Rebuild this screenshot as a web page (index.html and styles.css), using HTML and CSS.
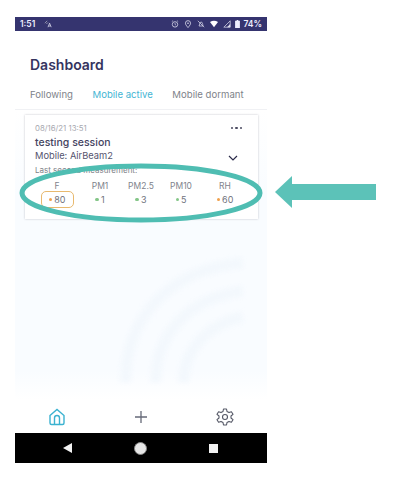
FILE: index.html
```html
<!DOCTYPE html>
<html lang="en">
<head>
  <meta charset="UTF-8">
  <meta name="viewport" content="width=device-width, initial-scale=1.0">
  <title>Dashboard</title>
  <link rel="stylesheet" href="styles.css">
</head>
<body>
  <div class="phone">
    <div class="status-bar">
      <div class="status-left">
        <span>1:51</span>
        <svg class="status-icon" viewBox="0 0 10 10"><path d="M1 4 L4 1 M3 5 L5 3" stroke="#aab" stroke-width="1" fill="none"/><path d="M5 9 L7 4 L9 9 M6 7.5 H8" stroke="#dde" stroke-width="1" fill="none"/></svg>
      </div>
      <div class="status-right">
        <svg class="status-icon" viewBox="0 0 10 10"><circle cx="5" cy="5.5" r="3.4" stroke="#dde" fill="none"/><path d="M5 3.6 V5.6 L6.3 6.4 M1 2 L2.6 .8 M9 2 L7.4 .8" stroke="#dde" stroke-width=".8" fill="none"/></svg>
        <svg class="status-icon" viewBox="0 0 10 10"><path d="M5 9.5 C3 7 1.8 5.6 1.8 4 A3.2 3.2 0 0 1 8.2 4 C8.2 5.6 7 7 5 9.5 Z" stroke="#dde" fill="none"/><circle cx="5" cy="4" r="1" fill="#dde"/></svg>
        <svg class="status-icon" viewBox="0 0 10 10"><path d="M2.5 7.5 C3.5 6 3 3 5 2.5 C7 2.5 7 5 7.5 7.5 Z M1 1 L9 9" stroke="#dde" stroke-width=".9" fill="none"/></svg>
        <svg class="status-icon" viewBox="0 0 10 10"><path d="M0 2.5 Q5 -.5 10 2.5 L5 9 Z" fill="#fff"/></svg>
        <svg class="status-icon" viewBox="0 0 10 10"><path d="M1 9 L9 1 V9 Z" stroke="#dde" stroke-width=".9" fill="none"/><path d="M5 9 L9 5 V9 Z" fill="#dde"/></svg>
        <svg class="battery" viewBox="0 0 6 10"><path d="M2 0 H4 V1 H6 V10 H0 V1 H2 Z" fill="#eef"/></svg>
        <span>74%</span>
      </div>
    </div>

    <div class="screen">
      <h1 class="title">Dashboard</h1>
      <div class="tabs">
        <span class="tab">Following</span>
        <span class="tab tab-active">Mobile active</span>
        <span class="tab">Mobile dormant</span>
      </div>

      <div class="content">
        <div class="card">
          <div class="card-top">
            <span class="date">08/16/21 13:51</span>
            <span class="dots"><i></i><i></i><i></i></span>
          </div>
          <div class="name">testing session</div>
          <div class="device-row">
            <span class="device">Mobile: AirBeam2</span>
            <svg class="chevron" viewBox="0 0 10 6"><path d="M1 1 L5 5 L9 1" stroke="#2b2b4a" stroke-width="1.2" fill="none"/></svg>
          </div>
          <div class="last">Last second measurement:</div>
          <div class="stats">
            <div class="stat"><span class="label">F</span><span class="value value-box"><i class="dot orange"></i>80</span></div>
            <div class="stat"><span class="label">PM1</span><span class="value"><i class="dot green"></i>1</span></div>
            <div class="stat"><span class="label">PM2.5</span><span class="value"><i class="dot green"></i>3</span></div>
            <div class="stat"><span class="label">PM10</span><span class="value"><i class="dot green"></i>5</span></div>
            <div class="stat"><span class="label">RH</span><span class="value"><i class="dot orange"></i>60</span></div>
          </div>
        </div>
        <svg class="watermark" viewBox="0 0 130 130"><path d="M5 125 C5 60 50 12 122 6 M35 125 C35 80 65 42 122 34 M63 125 C63 95 85 68 122 60" stroke="#f3f8fd" stroke-width="11" fill="none"/></svg>
      </div>

      <div class="bottom-nav">
        <svg class="nav-icon" viewBox="0 0 18 18"><path d="M2 7.5 L9 1.5 L16 7.5 V15 A1.5 1.5 0 0 1 14.5 16.500 H3.500 A1.500 1.500 0 0 1 2 15 Z M6.500 16.500 V10 A2.500 2.500 0 0 1 11.500 10 V16.500" stroke="#3bb2d0" stroke-width="1.400" fill="none"/></svg>
        <svg class="nav-icon" viewBox="0 0 18 18"><path d="M9 3 V15 M3 9 H15" stroke="#666a78" stroke-width="1.300" fill="none"/></svg>
        <svg class="nav-icon" viewBox="0 0 18 18"><path d="M7.500 1 H10.500 L11 3.500 L13 4.600 L15.400 3.700 L17 6.300 L15 8 V10 L17 11.700 L15.400 14.300 L13 13.400 L11 14.500 L10.500 17 H7.500 L7 14.500 L5 13.400 L2.600 14.300 L1 11.700 L3 10 V8 L1 6.300 L2.600 3.700 L5 4.600 L7 3.500 Z" stroke="#555866" stroke-width="1.100" stroke-linejoin="round" fill="none"/><circle cx="9" cy="9" r="2.500" stroke="#555866" stroke-width="1.100" fill="none"/></svg>
      </div>
    </div>

    <div class="system-nav">
      <span class="sys-back"></span>
      <span class="sys-home"></span>
      <span class="sys-recent"></span>
    </div>
  </div>

  <svg class="ellipse" viewBox="0 0 244 60"><ellipse cx="122" cy="30" rx="119" ry="27" stroke="#4fbdb2" stroke-width="5" fill="none"/></svg>
  <svg class="arrow" viewBox="0 0 101 32"><path d="M0 16 L17 0 V8 H101 V24 H17 V32 Z" fill="#5cc2b8"/></svg>
</body>
</html>
```

FILE: styles.css
```css
body {
  margin: 0;
  padding: 0;
  background-color: #fff;
  font-family: "Inter", "Liberation Sans", sans-serif;
}

.phone {
  width: 252px;
  height: 446px;
  margin: 17px 0 0 15px;
  display: flex;
  flex-direction: column;
}

.status-bar {
  height: 14px;
  flex-shrink: 0;
  background-color: #35346f;
  color: #eef;
  font-size: 8.5px;
  font-weight: 600;
  display: flex;
  justify-content: space-between;
  align-items: center;
  padding: 0 5px;
}

.status-left,
.status-right {
  display: flex;
  align-items: center;
}

.status-left {
  gap: 7px;
}

.status-right {
  gap: 3px;
}

.status-icon {
  width: 8px;
  height: 8px;
  margin-left: 2px;
}

.battery {
  width: 5px;
  height: 8px;
  margin-left: 1px;
}

.screen {
  flex: 1;
  display: flex;
  flex-direction: column;
  min-height: 0;
}

.title {
  margin: 26px 0 0 15px;
  height: 16px;
  line-height: 16px;
  color: #35345f;
  font-size: 14px;
  font-weight: 600;
}

.tabs {
  display: flex;
  gap: 19.5px;
  padding: 10px 0 0 15px;
  height: 32px;
  box-sizing: border-box;
  font-size: 9.6px;
  line-height: 13px;
  color: #80838a;
  border-bottom: 1px solid #f0f1f4;
  margin-top: 5px;
}

.tab-active {
  color: #45b5d3;
}

.content {
  flex: 1;
  padding: 5px 9px 0 10px;
  background: linear-gradient(#ffffff, #f9fcff 30%, #f9fcff 90%, #fff);
  overflow: hidden;
  position: relative;
}

.card {
  height: 104px;
  box-sizing: border-box;
  padding: 8px 9px 0 10px;
  background-color: #fff;
  box-shadow: 0 0 2px rgba(60, 60, 80, .3);
  position: relative;
  z-index: 1;
}

.card-top {
  display: flex;
  justify-content: space-between;
  align-items: center;
  height: 10px;
}

.date {
  font-size: 7.8px;
  color: #a8a9b0;
}

.dots {
  display: flex;
  gap: 2px;
  padding-right: 7px;
}

.dots i {
  width: 2.500px;
  height: 2.500px;
  border-radius: 50%;
  background-color: #4a4a60;
}

.name {
  margin-top: 3px;
  font-size: 10.500px;
  line-height: 14px;
  font-weight: 500;
  color: #45445f;
}

.device-row {
  display: flex;
  justify-content: space-between;
  align-items: center;
  height: 14px;
  margin-top: -2px;
  padding-right: 11px;
}

.device {
  font-size: 9.300px;
  color: #55546e;
}

.chevron {
  width: 10px;
  height: 6px;
  margin-top: 5px;
}

.last {
  margin-top: 2px;
  font-size: 8px;
  line-height: 12px;
  color: #808288;
}

.stats {
  display: grid;
  grid-template-columns: 48px 38px 44px 36px 52px;
  margin: 4px 0 0 -2px;
}

.stat {
  display: flex;
  flex-direction: column;
  align-items: center;
}

.label {
  font-size: 8.500px;
  line-height: 12px;
  color: #80838c;
}

.value {
  display: flex;
  align-items: center;
  justify-content: center;
  gap: 2px;
  height: 17px;
  margin-top: -1px;
  font-size: 9px;
  color: #70727c;
  box-sizing: border-box;
}

.value-box {
  width: 33px;
  border: 1px solid #e8b96e;
  border-radius: 5px;
}

.dot {
  width: 3.500px;
  height: 3.500px;
  border-radius: 50%;
}

.orange {
  background-color: #f0a04c;
}

.green {
  background-color: #84c688;
}

/* faint signal mark behind the card list */
.watermark {
  position: absolute;
  right: 14px;
  bottom: 13px;
  width: 135px;
  height: 130px;
  filter: blur(2px);
}

.bottom-nav {
  height: 33px;
  flex-shrink: 0;
  display: flex;
  justify-content: space-between;
  align-items: center;
  padding: 0 33px 0 33px;
  background-color: #fff;
}

.nav-icon {
  width: 18px;
  height: 18px;
}

.system-nav {
  height: 30px;
  flex-shrink: 0;
  background-color: #000;
  display: flex;
  justify-content: space-between;
  align-items: center;
  padding: 0 49px 0 48px;
}

.sys-back {
  width: 0;
  height: 0;
  border-top: 5px solid transparent;
  border-bottom: 5px solid transparent;
  border-right: 9px solid #f2f2f2;
}

.sys-home {
  width: 11px;
  height: 11px;
  border-radius: 50%;
  background-color: #e6e6e6;
  border: 1px solid #888;
}

.sys-recent {
  width: 9px;
  height: 9px;
  background-color: #f2f2f2;
}

/* annotation drawn over the screenshot */
.ellipse {
  position: absolute;
  left: 19px;
  top: 163px;
  width: 244px;
  height: 60px;
  z-index: 2;
}

.arrow {
  position: absolute;
  left: 275px;
  top: 176px;
  width: 101px;
  height: 32px;
}
```
